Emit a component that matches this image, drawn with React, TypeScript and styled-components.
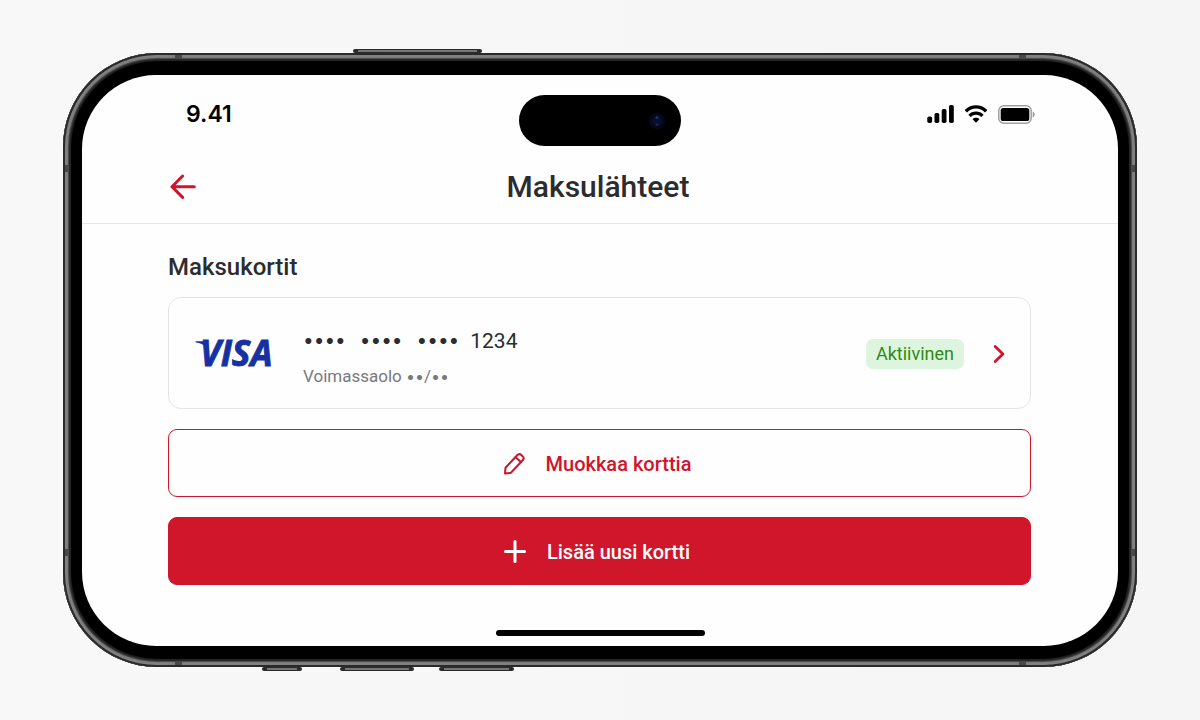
import React from "react";
import styled, { createGlobalStyle } from "styled-components";

const GlobalStyle = createGlobalStyle`
  *, *::before, *::after { box-sizing: border-box; }
  body {
    margin: 0;
    background: #f6f6f6;
    color: #2b2c2f;
    font-family: Roboto, "Liberation Sans", sans-serif;
  }
  button { font: inherit; cursor: pointer; }
`;

const Stage = styled.div`
  min-height: 100vh;
  padding: 53px 63px;
  background: linear-gradient(90deg, #f8f8f8, #f5f5f5);
`;

const Phone = styled.div`
  position: relative;
  padding: 22px 19px 21px;
  border-radius: 94px;
  background: #000;
  box-shadow: inset 0 0 0 2px #2a2a2a, inset 0 0 1px 5px #808080, inset 0 0 1px 6px #4a4a4a, inset 0 0 1px 8px #262626;
`;

const SideKey = styled.span<{ $edge: "top" | "bottom"; $left: number; $width: number }>`
  position: absolute;
  ${(p) => p.$edge}: -4px;
  left: ${(p) => p.$left}px;
  width: ${(p) => p.$width}px;
  height: 4px;
  border: solid #2b2b2b;
  border-width: 1px 5px;
  border-radius: 2px;
  background: #777;
`;

const AntennaBand = styled.span<{ $side: "top" | "bottom" | "left" | "right"; $at: number; $fromEnd?: boolean }>`
  position: absolute;
  ${(p) => p.$side}: 2px;
  ${(p) =>
    p.$side === "top" || p.$side === "bottom"
      ? `${p.$fromEnd ? "right" : "left"}: ${p.$at}px; width: 7px; height: 4px;`
      : `${p.$fromEnd ? "bottom" : "top"}: ${p.$at}px; width: 3px; height: 7px;`}
  background: #484848;
`;

const Screen = styled.div`
  display: flex;
  flex-direction: column;
  border-radius: 74px;
  background: #fefefe;
  overflow: hidden;
`;

const StatusBar = styled.div`
  display: grid;
  grid-template-columns: 1fr auto 1fr;
  align-items: start;
  padding: 20px 83px 5px 104px;
`;

const Clock = styled.time`
  font-family: Inter, sans-serif;
  font-size: 23px;
  font-weight: 600;
  line-height: 38px;
  color: #000;
`;

const Island = styled.div`
  display: flex;
  align-items: center;
  justify-content: flex-end;
  width: 162px;
  height: 51px;
  margin-right: 21px;
  padding-right: 15px;
  border-radius: 26px;
  background: #000;
`;

const StatusIcons = styled.div`
  display: flex;
  align-items: center;
  justify-content: flex-end;
  gap: 11px;
  height: 38px;
`;

const Header = styled.header`
  display: grid;
  grid-template-columns: 1fr auto 1fr;
  align-items: center;
  height: 73px;
  padding: 0 92px 0 88px;
  border-bottom: 1px solid #e6e6e6;
`;

const BackButton = styled.button`
  display: flex;
  justify-self: start;
  padding: 0;
  border: 0;
  background: none;
  color: #d0142c;
`;

const Title = styled.h1`
  margin: 0;
  font-size: 30px;
  font-weight: 500;
  line-height: 36px;
`;

const Content = styled.main`
  display: flex;
  flex-direction: column;
  gap: 20px;
  padding: 27px 87px 45px 86px;
`;

const Section = styled.section`
  display: flex;
  flex-direction: column;
  gap: 14px;
`;

const SectionTitle = styled.h2`
  margin: 0;
  font-size: 24px;
  font-weight: 500;
  line-height: 32px;
`;

const CardRow = styled.button`
  display: flex;
  align-items: center;
  height: 112px;
  padding: 2px 25px 0 26px;
  border: 1px solid #e4e4e5;
  border-radius: 13px;
  background: #fefefe;
  color: inherit;
  text-align: left;
`;

const CardText = styled.span`
  display: flex;
  flex: 1;
  flex-direction: column;
  gap: 9px;
  margin-left: 25px;
  padding-top: 6px;
`;

const CardNumber = styled.span`
  display: flex;
  align-items: center;
  gap: 11px;
  font-size: 21px;
  line-height: 28px;
`;

const DotGroups = styled.span`
  display: flex;
  gap: 14px;
`;

const Dots = styled.span`
  font-family: Inter, sans-serif;
  font-size: 19px;
`;

const Expiry = styled.span`
  font-size: 17px;
  line-height: 24px;
  color: #77797c;
`;

const ExpiryDots = styled.span`
  font-family: Inter, sans-serif;
  font-size: 16px;
`;

const Badge = styled.span`
  margin-right: 29px;
  padding: 0 10px;
  border-radius: 7px;
  background: #ddf5df;
  color: #2f8a14;
  font-size: 18px;
  line-height: 30px;
`;

const ActionButton = styled.button<{ $primary?: boolean }>`
  display: flex;
  align-items: center;
  justify-content: center;
  gap: 20px;
  height: 68px;
  padding: 2px 6px 0 0;
  border: 1px solid #d0142c;
  border-radius: 9px;
  background: ${(p) => (p.$primary ? "#d0162b" : "#fefefe")};
  color: ${(p) => (p.$primary ? "#fff" : "#d0142c")};
  font-size: 20px;
  font-weight: 500;
  line-height: 28px;
`;

const HomeIndicator = styled.div`
  align-self: center;
  width: 209px;
  height: 6px;
  margin-bottom: 10px;
  border-radius: 3px;
  background: #000;
`;

const Camera = () => (
  <svg width="18" height="18" viewBox="0 0 18 18" aria-hidden="true">
    <circle cx="9" cy="9" r="8" fill="#06071a" />
    <circle cx="9" cy="9" r="5" fill="#090f2a" />
    <circle cx="9" cy="5.500" r="1.500" fill="#1b3564" />
    <circle cx="9" cy="12.500" r="1.300" fill="#162c58" />
  </svg>
);

const SignalIcon = () => (
  <svg width="27" height="18" viewBox="0 0 27 18" aria-hidden="true">
    <rect x="0.300" y="11.500" width="4.800" height="6.500" rx="1.700" />
    <rect x="7.500" y="8" width="4.800" height="10" rx="1.700" />
    <rect x="14.700" y="4" width="4.800" height="14" rx="1.700" />
    <rect x="22" y="0" width="4.800" height="18" rx="1.700" />
  </svg>
);

const WifiIcon = () => (
  <svg width="22" height="18" viewBox="1 0 22 18" aria-hidden="true">
    <path d="M1.800 6.300C7.500 0.500 16.500 0.500 22.200 6.300" fill="none" stroke="#000" strokeWidth="3.300" />
    <path d="M5.500 10.900C9.200 7.200 14.800 7.200 18.500 10.900" fill="none" stroke="#000" strokeWidth="3.200" />
    <path d="M8.600 14.200C10.400 12.300 13.600 12.300 15.400 14.200L12 17.800Z" />
  </svg>
);

const BatteryIcon = () => (
  <svg width="37" height="19" viewBox="0 0 37 19" aria-hidden="true">
    <rect x="0.800" y="0.800" width="32.400" height="17.400" rx="5" fill="none" stroke="#a0a0a0" strokeWidth="1.500" />
    <rect x="2.700" y="3" width="28.600" height="13" rx="2.600" />
    <path d="M34.700 6.500C37.400 7.500 37.400 11.500 34.700 12.500Z" fill="#a0a0a0" />
  </svg>
);

const ArrowLeftIcon = () => (
  <svg width="26" height="26" viewBox="0 0 26 26" fill="none" stroke="currentColor" strokeWidth="3" strokeLinecap="round" strokeLinejoin="round" aria-hidden="true">
    <path d="M24.300 12.700H2M12.600 2L2 12.700L12.600 23.400" />
  </svg>
);

const VisaLogo = () => (
  <svg width="83" height="52" viewBox="0 -12 83 52" fill="#1631a3" role="img" aria-label="Visa">
    <path d="M0.500 1.300H12L14 12C11 5.500 6.500 3.100 0.500 2.300Z" />
    <text x="5" y="26" stroke="#1631a3" strokeWidth="0.900" fontFamily="Open Sans, sans-serif" fontSize="35" fontWeight="700" fontStyle="italic">
      VISA
    </text>
  </svg>
);

const ChevronIcon = () => (
  <svg width="12" height="20" viewBox="0 0 12 20" fill="none" stroke="#d0142c" strokeWidth="2.800" strokeLinecap="round" strokeLinejoin="round" aria-hidden="true">
    <path d="M2.200 2.500L9.900 10L2.200 17.500" />
  </svg>
);

const PencilIcon = () => (
  <svg width="24" height="24" viewBox="0 0 24 24" fill="none" stroke="currentColor" strokeWidth="2" strokeLinecap="round" strokeLinejoin="round" aria-hidden="true">
    <path d="M3 21.500L3.500 15.700L15.200 3.200C16.500 1.800 18 1.800 19.300 3L20.600 4.300C21.900 5.500 21.900 6.900 20.700 8.200L8.900 20.800Z" />
    <path d="M13.600 5.200L18.800 10" />
  </svg>
);

const PlusIcon = () => (
  <svg width="24" height="24" viewBox="0 0 24 24" fill="none" stroke="currentColor" strokeWidth="3" strokeLinecap="round" aria-hidden="true">
    <path d="M12 1.500V21.500M2.500 11.500H21.500" />
  </svg>
);

export default function App() {
  return (
    <>
      <GlobalStyle />
      <Stage>
        <Phone>
          <SideKey $edge="top" $left={290} $width={129} />
          <SideKey $edge="bottom" $left={199} $width={40} />
          <SideKey $edge="bottom" $left={277} $width={74} />
          <SideKey $edge="bottom" $left={376} $width={75} />
          <AntennaBand $side="top" $at={112} />
          <AntennaBand $side="top" $at={111} $fromEnd />
          <AntennaBand $side="bottom" $at={112} />
          <AntennaBand $side="bottom" $at={111} $fromEnd />
          <AntennaBand $side="left" $at={112} />
          <AntennaBand $side="left" $at={111} $fromEnd />
          <AntennaBand $side="right" $at={112} />
          <AntennaBand $side="right" $at={111} $fromEnd />
          <Screen>
            <StatusBar>
              <Clock>9.41</Clock>
              <Island>
                <Camera />
              </Island>
              <StatusIcons>
                <SignalIcon />
                <WifiIcon />
                <BatteryIcon />
              </StatusIcons>
            </StatusBar>
            <Header>
              <BackButton type="button" aria-label="Takaisin">
                <ArrowLeftIcon />
              </BackButton>
              <Title>Maksulähteet</Title>
            </Header>
            <Content>
              <Section>
                <SectionTitle>Maksukortit</SectionTitle>
                <CardRow type="button">
                  <VisaLogo />
                  <CardText>
                    <CardNumber>
                      <DotGroups>
                        <Dots>••••</Dots>
                        <Dots>••••</Dots>
                        <Dots>••••</Dots>
                      </DotGroups>
                      1234
                    </CardNumber>
                    <Expiry>
                      Voimassaolo <ExpiryDots>••</ExpiryDots>/<ExpiryDots>••</ExpiryDots>
                    </Expiry>
                  </CardText>
                  <Badge>Aktiivinen</Badge>
                  <ChevronIcon />
                </CardRow>
              </Section>
              <ActionButton type="button">
                <PencilIcon />
                Muokkaa korttia
              </ActionButton>
              <ActionButton type="button" $primary>
                <PlusIcon />
                Lisää uusi kortti
              </ActionButton>
            </Content>
            <HomeIndicator />
          </Screen>
        </Phone>
      </Stage>
    </>
  );
}
